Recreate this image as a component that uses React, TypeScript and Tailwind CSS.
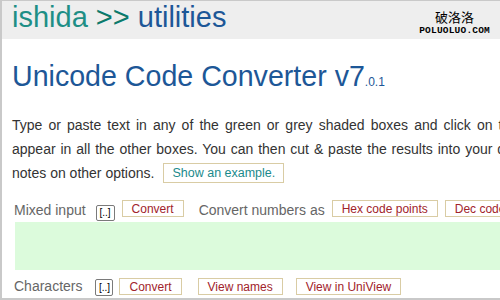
import React from "react";

const Btn = ({ label, className = "" }: { label: string; className?: string }) => (
  <span
    className={`inline-flex h-[17px] shrink-0 items-center border border-[#d9cca4] bg-white px-[9px] text-[12px] leading-none text-[#a1232b] ${className}`}
  >
    {label}
  </span>
);

const Expand = ({ className = "" }: { className?: string }) => (
  <span
    className={`inline-flex shrink-0 items-center justify-center rounded-[2px] border border-[#7a7a7a] bg-white text-[10px] leading-none text-black ${className}`}
  >
    [..]
  </span>
);

export default function App() {
  return (
    <div
      className="h-[300px] w-[500px] overflow-hidden border-t border-b-2 border-l-2 border-[#c9c9c9] bg-white text-[#333]"
      style={{ fontFamily: '"Liberation Sans", Arial, sans-serif' }}
    >
      <div className="flex h-[38px] items-start justify-between bg-[#eeeeee] pl-[10px] pr-[10px]">
        <div className="whitespace-nowrap pt-[2px] text-[29px] leading-[28px]">
          <span className="text-[#1e8f86]">ishida</span>{" "}
          <span className="text-[#0b7a6b]">&gt;&gt;</span>{" "}
          <span className="text-[#1d5797]">utilities</span>
        </div>
        <div className="flex flex-col items-center pt-[8px]">
          <span
            className="text-[13px] leading-[15px] text-black"
            style={{ fontFamily: '"Noto Sans CJK SC", sans-serif' }}
          >
            破洛洛
          </span>
          <span
            className="mt-[2px] text-[9.5px] font-bold leading-none tracking-[0.2px] text-black"
            style={{ fontFamily: '"Liberation Mono", monospace' }}
          >
            POLUOLUO.COM
          </span>
        </div>
      </div>

      <div className="pl-[10px]">
        <h1 className="mt-[21px] whitespace-nowrap text-[28.6px] leading-[32px] text-[#1d5797]">
          Unicode Code Converter v7<span className="text-[12px]">.0.1</span>
        </h1>

        <div className="mt-[15px] whitespace-nowrap text-[14px] leading-[24px] text-[#333]">
          <div className="[word-spacing:2.2px]">
            Type or paste text in any of the green or grey shaded boxes and click on the Convert button above it.
          </div>
          <div className="[word-spacing:1px]">
            appear in all the other boxes. You can then cut &amp; paste the results into your document.
          </div>
          <div className="flex items-center">
            <span>notes on other options.</span>
            <span className="ml-[9px] inline-flex h-[20px] shrink-0 items-center border border-[#d9cca4] px-[8px] text-[12.5px] leading-none text-[#1a8a8c]">
              Show an example.
            </span>
          </div>
        </div>

        <div className="mt-[14px] flex items-start whitespace-nowrap text-[14px] leading-[20px] text-[#666]">
          <span className="ml-[2px] mt-[1px] shrink-0">Mixed input</span>
          <Expand className="ml-[10px] mt-[6px] h-[16px] w-[19px]" />
          <Btn label="Convert" className="ml-[7px] mt-[1px]" />
          <span className="ml-[15px] mt-[1px] shrink-0">Convert numbers as</span>
          <Btn label="Hex code points" className="ml-[7px] mt-[1px]" />
          <Btn label="Dec code points" className="ml-[7px] mt-[1px]" />
        </div>

        <div className="ml-[3px] mt-[1px] h-[48px] w-[600px] shrink-0 bg-[#dcfbdc]" />

        <div className="mt-[6px] flex items-start whitespace-nowrap text-[14px] leading-[20px] text-[#666]">
          <span className="ml-[2px] shrink-0">Characters</span>
          <Expand className="ml-[13px] mt-[3px] h-[17px] w-[18px]" />
          <Btn label="Convert" className="ml-[6px] mt-[2px]" />
          <Btn label="View names" className="ml-[16px] mt-[2px]" />
          <Btn label="View in UniView" className="ml-[13px] mt-[2px]" />
        </div>
      </div>
    </div>
  );
}
